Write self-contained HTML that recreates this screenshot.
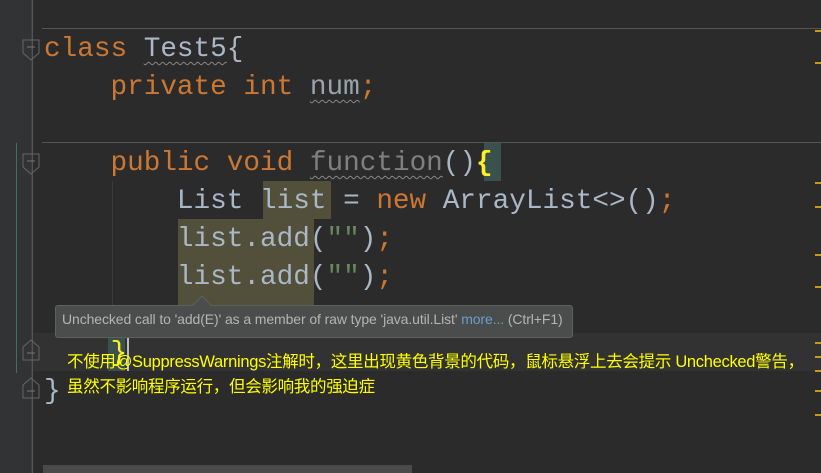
<!DOCTYPE html>
<html><head><meta charset="utf-8"><style>
html,body{margin:0;padding:0;}
body{width:821px;height:473px;background:#2b2b2b;position:relative;overflow:hidden;font-family:"Liberation Mono",monospace;}
.gut{position:absolute;left:0;top:0;width:32px;height:473px;background:#313335;}
.vl{position:absolute;left:32px;top:0;width:1px;height:473px;background:#555;}
.sep{position:absolute;left:42px;right:0;height:1px;background:#555;}
.code{position:absolute;left:44px;font-size:27.7px;line-height:38px;white-space:pre;color:#a9b7c6;}
.k{color:#cc7832}
.w{text-decoration:underline wavy #888;text-decoration-thickness:1px;text-underline-offset:5px}
.g{color:#808080}
.hl{position:absolute;background:#52503a;}
.m{position:absolute;left:815px;width:6px;height:2px;background:#c59a20;}
.fold{position:absolute;left:22px;width:18px;height:22px;}
</style></head><body>
<div class="gut"></div>
<div class="vl"></div>
<div style="position:absolute;left:31px;top:0;width:1px;height:473px;background:#3c3f41"></div>
<div class="sep" style="top:28px"></div>
<div class="sep" style="top:142px"></div>
<div style="position:absolute;left:16px;top:143px;width:1px;height:230px;background:#4a6a66"></div>
<div style="position:absolute;left:112px;top:181px;width:1px;height:150px;background:#3a3a3a"></div>
<div style="position:absolute;left:33px;top:333px;width:788px;height:38px;background:#323232"></div>
<div class="hl" style="left:263px;top:181px;width:68px;height:38px"></div>
<div class="hl" style="left:178px;top:219px;width:136px;height:86px"></div>
<div style="position:absolute;left:484px;top:143px;width:17px;height:38px;background:#3b514d"></div>
<div style="position:absolute;left:108px;top:337px;width:17px;height:34px;background:#3b514d"></div>
<svg class="fold" style="top:39px" viewBox="0 0 18 22"><path d="M1 1H17V14L9 21L1 14Z" fill="none" stroke="#666"/><path d="M5 8H13" stroke="#777"/></svg>
<svg class="fold" style="top:153px" viewBox="0 0 18 22"><path d="M1 1H17V14L9 21L1 14Z" fill="none" stroke="#666"/><path d="M5 8H13" stroke="#777"/></svg>
<svg class="fold" style="top:339px" viewBox="0 0 18 22"><path d="M1 21H17V8L9 1L1 8Z" fill="none" stroke="#666"/><path d="M5 14H13" stroke="#777"/></svg>
<svg class="fold" style="top:377px" viewBox="0 0 18 22"><path d="M1 21H17V8L9 1L1 8Z" fill="none" stroke="#666"/><path d="M5 14H13" stroke="#777"/></svg>
<div class="code" style="top:31px"><span class="k">class</span> <span class="w">Test5</span>{
    <span class="k">private int</span> <span class="w" style="color:#9aa3ad">num</span><span class="k">;</span>

    <span class="k">public void</span> <span class="w g">function</span>()<span style="color:#ffef28;font-weight:bold">{</span>
        List list = <span class="k">new</span> ArrayList&lt;&gt;()<span class="k">;</span>
        list.add(<span style="color:#6a8759">""</span>)<span class="k">;</span>
        list.add(<span style="color:#6a8759">""</span>)<span class="k">;</span>

    <span style="color:#ffef28">}</span>
}</div>
<div style="position:absolute;left:127px;top:337px;width:2px;height:34px;background:#bbb"></div>
<div class="m" style="top:30px"></div><div class="m" style="top:62px"></div>
<div class="m" style="top:182px"></div><div class="m" style="top:206px"></div>
<div class="m" style="top:254px"></div><div class="m" style="top:286px"></div>
<div class="m" style="top:342px"></div><div class="m" style="top:356px"></div><div class="m" style="top:370px"></div>
<div class="m" style="top:390px"></div><div class="m" style="top:414px"></div>
<div style="position:absolute;left:43px;top:465px;width:369px;height:8px;background:#4a4a4a"></div>
<div style="position:absolute;left:55px;top:305px;width:516px;height:31px;background:#4b4d4d;border:1px solid #5e6060;border-radius:3px;"></div>
<svg style="position:absolute;left:192px;top:295px" width="20" height="12"><path d="M0 11L10 1L20 11" fill="#4b4d4d" stroke="#5e6060"/><rect x="0" y="11" width="20" height="2" fill="#4b4d4d"/></svg>
<div style="position:absolute;left:62px;top:311px;font:14px 'Liberation Sans',sans-serif;color:#b4b4b4;white-space:nowrap;letter-spacing:-0.1px">Unchecked call to 'add(E)' as a member of raw type 'java.util.List' <span style="color:#6c9ec5">more...</span> (Ctrl+F1)</div>
<div style="position:absolute;left:67px;top:350px;font:16.5px 'Liberation Sans','Noto Sans CJK SC',sans-serif;color:#ffff00;line-height:25px;white-space:nowrap;letter-spacing:-0.3px">不使用@SuppressWarnings注解时，这里出现黄色背景的代码，鼠标悬浮上去会提示 Unchecked警告，<br>虽然不影响程序运行，但会影响我的强迫症</div>
</body></html>
